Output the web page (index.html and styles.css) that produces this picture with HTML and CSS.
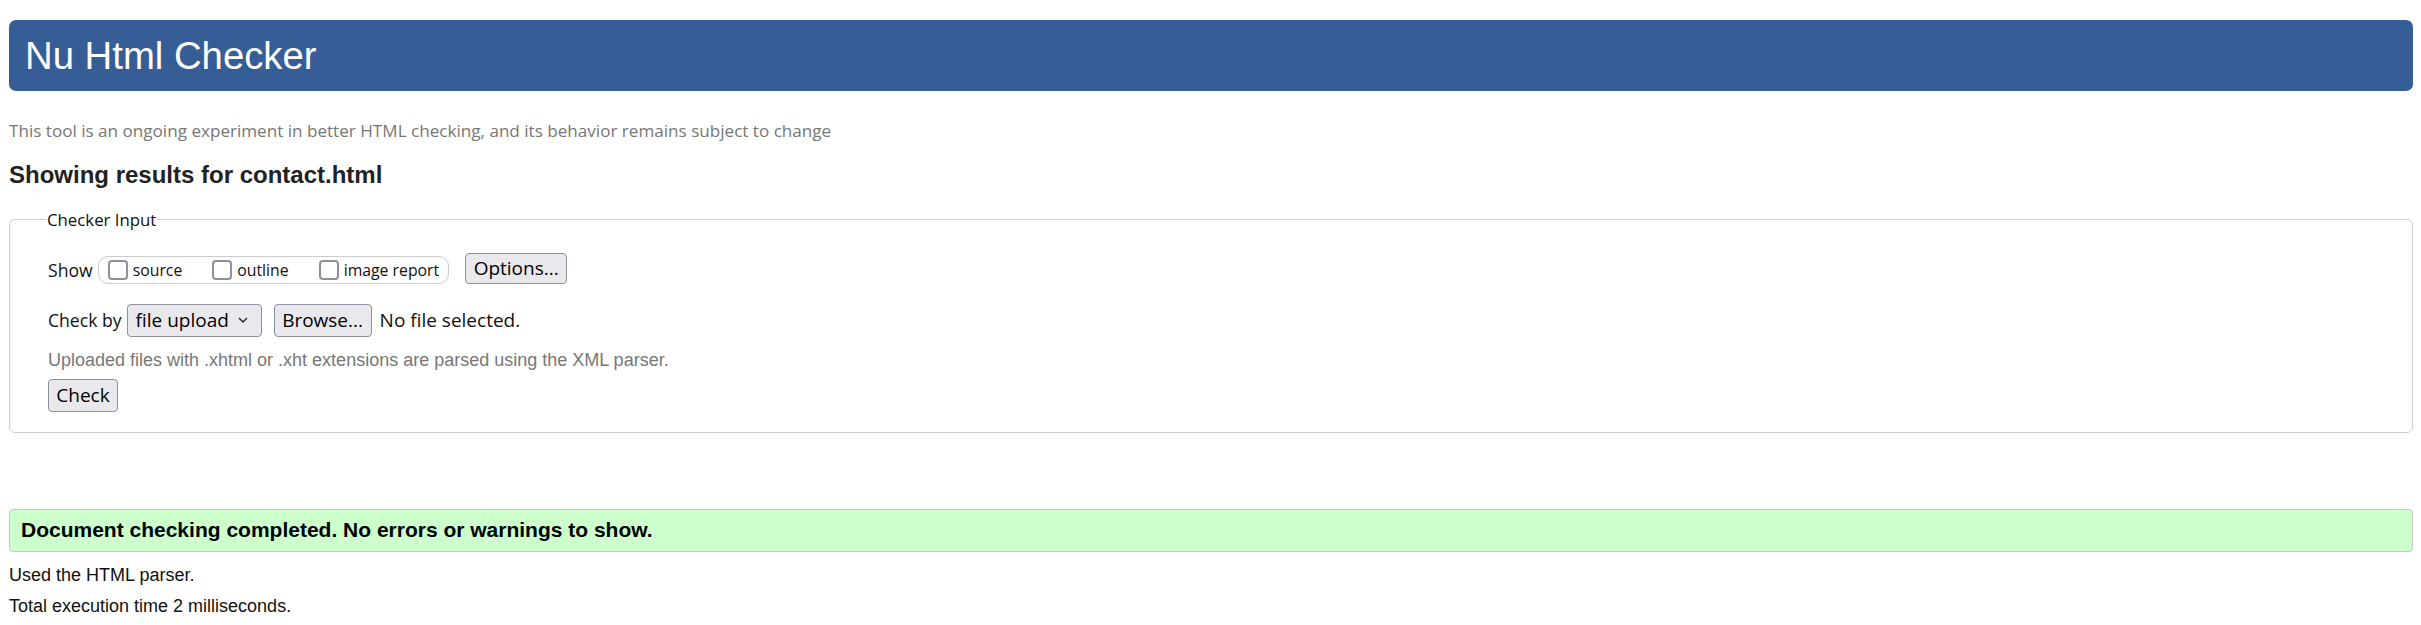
FILE: index.html
```html
<!DOCTYPE html>
<html lang="en">
<head>
<meta charset="utf-8">
<title>Showing results for contact.html - Nu Html Checker</title>
<link rel="stylesheet" href="styles.css">
</head>
<body>
<div class="page">
  <header class="banner"><h1 class="title">Nu Html Checker</h1></header>
  <p class="about">This tool is an ongoing experiment in better HTML checking, and its behavior remains subject to change</p>
  <h2 class="results-for">Showing results for contact.html</h2>
  <fieldset class="input-box">
    <legend class="input-legend">Checker Input</legend>
    <div class="row row-show">
      <span class="label">Show</span>
      <span class="pill">
        <span class="opt"><span class="box"></span>source</span>
        <span class="opt"><span class="box"></span>outline</span>
        <span class="opt"><span class="box"></span>image report</span>
      </span>
      <span class="btn btn-options">Options...</span>
    </div>
    <div class="row row-check">
      <span class="label label-check">Check by</span>
      <span class="select">file upload
        <svg class="chev" width="10" height="6" viewBox="0 0 10 6"><path d="M1 1 L5 5 L9 1" fill="none" stroke="#222" stroke-width="1.4"/></svg>
      </span>
      <span class="btn btn-browse">Browse...</span>
      <span class="nofile">No file selected.</span>
    </div>
    <p class="hint">Uploaded files with .xhtml or .xht extensions are parsed using the XML parser.</p>
    <span class="btn btn-check">Check</span>
  </fieldset>
  <p class="success">Document checking completed. No errors or warnings to show.</p>
  <p class="meta">Used the HTML parser.</p>
  <p class="meta meta-time">Total execution time 2 milliseconds.</p>
</div>
</body>
</html>
```

FILE: styles.css
```css
html, body {
  margin: 0;
  padding: 0;
  background: #fff;
}
body {
  font-family: "Liberation Sans", Arial, sans-serif;
  color: #111;
}
.page {
  padding: 20px 8px 0 9px;
}
.banner {
  height: 71px;
  box-sizing: border-box;
  background: #365d95;
  border-radius: 7px;
  display: flex;
  align-items: center;
  padding-left: 16px;
}
.title {
  margin: 0;
  font-size: 38.3px;
  font-weight: normal;
  color: #fff;
  line-height: normal;
}
.about {
  margin: 29.5px 0 0;
  font-family: "Open Sans", sans-serif;
  font-size: 17.1px;
  line-height: 20px;
  color: #777;
}
.results-for {
  margin: 20px 0 0;
  font-size: 24px;
  line-height: 28px;
  font-weight: bold;
  color: #222;
}
.input-box {
  margin: 19px 0 0;
  border: 1px solid #ccc;
  border-radius: 6px;
  padding: 0 20px 20px 38px;
  min-inline-size: 0;
}
.input-legend {
  font-family: "Open Sans", sans-serif;
  font-size: 16.8px;
  padding: 0 1px;
  margin-left: -2px;
  color: #111;
}
.row {
  display: flex;
}
.row-show {
  margin-top: 22px;
  height: 31px;
  align-items: flex-end;
}
.label {
  font-family: "Open Sans", sans-serif;
  font-size: 17.6px;
  line-height: 28px;
  margin-right: 5px;
  color: #111;
}
.pill {
  display: flex;
  align-items: center;
  height: 28px;
  box-sizing: border-box;
  border: 1px solid #ccc;
  border-radius: 10px;
  padding: 0 9px;
}
.opt {
  display: flex;
  align-items: center;
  gap: 5px;
  font-family: "Open Sans", sans-serif;
  font-size: 15.8px;
  color: #111;
  margin-right: 30px;
}
.opt:last-child {
  margin-right: 0;
}
.box {
  width: 20px;
  height: 20px;
  box-sizing: border-box;
  border: 2px solid #8f8f9d;
  border-radius: 4px;
  background: #fff;
}
.btn {
  display: inline-flex;
  align-items: center;
  justify-content: center;
  box-sizing: border-box;
  background: #e9e9ed;
  border: 1px solid #8f8f9d;
  border-radius: 4px;
  font-family: "Open Sans", sans-serif;
  font-size: 19px;
  color: #000;
}
.btn-options {
  margin-left: 16px;
  width: 102px;
  height: 31px;
}
.row-check {
  margin-top: 20px;
  height: 33px;
  align-items: center;
}
.label-check {
  line-height: 33px;
}
.select {
  display: flex;
  align-items: center;
  justify-content: space-between;
  box-sizing: border-box;
  width: 135px;
  height: 33px;
  padding: 0 13px 0 8px;
  background: #e9e9ed;
  border: 1px solid #8f8f9d;
  border-radius: 4px;
  font-family: "Open Sans", sans-serif;
  font-size: 19px;
  color: #000;
}
.chev {
  display: block;
}
.btn-browse {
  margin-left: 12px;
  width: 98px;
  height: 33px;
}
.nofile {
  margin-left: 8px;
  font-family: "Open Sans", sans-serif;
  font-size: 19px;
  color: #111;
}
.hint {
  margin: 13px 0 0;
  font-size: 18px;
  line-height: 20px;
  color: #777;
}
.btn-check {
  margin-top: 9px;
  width: 70px;
  height: 33px;
}
.success {
  margin: 76px 0 0;
  background: #ccffcc;
  border: 1px solid #c8c8c8;
  border-radius: 4px;
  padding: 8.5px 11px;
  font-size: 21px;
  font-weight: bold;
  line-height: normal;
  color: #000;
}
.meta {
  margin: 13px 0 0;
  font-size: 18px;
  line-height: 20px;
  color: #111;
}
.meta-time {
  margin-top: 11px;
}
```
